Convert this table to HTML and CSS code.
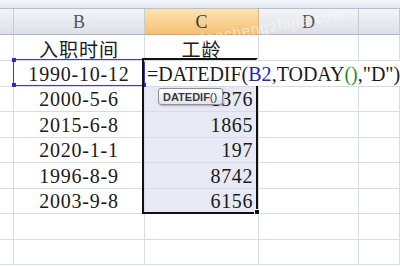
FILE: index.html
```html
<!DOCTYPE html>
<html>
<head>
<meta charset="utf-8">
<link rel="stylesheet" href="styles.css">
</head>
<body>
<div class="sheet">
  <div class="topbar"></div>
  <div class="grid">
    <div class="hd"></div>
    <div class="hd">B</div>
    <div class="hd hd-on">C</div>
    <div class="hd">D</div>
    <div class="hd"></div>

    <div class="c"></div>
    <div class="c cn">入职时间</div>
    <div class="c cn">工龄</div>
    <div class="c"></div>
    <div class="c"></div>

    <div class="c"></div>
    <div class="c dt">1990-10-12</div>
    <div class="c edit"><span>=DATEDIF(</span><span class="ref">B2</span><span>,TODAY</span><span class="par">()</span><span>,"D")</span></div>

    <div class="c"></div>
    <div class="c dt">2000-5-6</div>
    <div class="c num sel">1376</div>
    <div class="c"></div>
    <div class="c"></div>

    <div class="c"></div>
    <div class="c dt">2015-6-8</div>
    <div class="c num sel">1865</div>
    <div class="c"></div>
    <div class="c"></div>

    <div class="c"></div>
    <div class="c dt">2020-1-1</div>
    <div class="c num sel">197</div>
    <div class="c"></div>
    <div class="c"></div>

    <div class="c"></div>
    <div class="c dt">1996-8-9</div>
    <div class="c num sel">8742</div>
    <div class="c"></div>
    <div class="c"></div>

    <div class="c"></div>
    <div class="c dt">2003-9-8</div>
    <div class="c num sel">6156</div>
    <div class="c"></div>
    <div class="c"></div>

    <div class="c"></div>
    <div class="c"></div>
    <div class="c"></div>
    <div class="c"></div>
    <div class="c"></div>

    <div class="c"></div>
    <div class="c"></div>
    <div class="c"></div>
    <div class="c"></div>
    <div class="c"></div>
  </div>

  <div class="refbox">
    <i class="h tl"></i><i class="h tr"></i><i class="h bl"></i><i class="h br"></i>
  </div>
  <div class="selbox"></div>
  <div class="fill"></div>
  <div class="tip"><b>DATEDIF</b>()</div>
  <div class="wm">laochengzhijia.com</div>
</div>
</body>
</html>
```

FILE: styles.css
```css
* { box-sizing: border-box; }
html, body { margin: 0; padding: 0; background: #fff; }
body { width: 400px; height: 266px; overflow: hidden; }

.sheet { position: relative; width: 400px; height: 266px; overflow: hidden; }

.topbar {
  height: 9px;
  background: linear-gradient(#f4f7fb, #e3e9f2);
  border-bottom: 1px solid #b3c0d4;
}

.grid {
  display: grid;
  grid-template-columns: 14px 131px 114px 100px 41px;
  grid-template-rows: 26px 26px 26px 25px 26px 25px 26px 25px 26px 25px;
}

.hd {
  background: linear-gradient(#f3f4f7, #dde1e7);
  border-right: 1px solid #c6ccd6;
  border-bottom: 1px solid #a9b4c4;
  font-family: "Liberation Serif", serif;
  font-size: 18px;
  color: #555;
  display: flex;
  align-items: center;
  justify-content: center;
  padding-top: 1px;
}
.hd-on {
  background: linear-gradient(#fbe4b4, #f5c074);
  border-bottom-color: #e6a04a;
  border-right-color: #e8b878;
  color: #3a3a3a;
}

.c {
  border-right: 1px solid #d6dbe4;
  border-bottom: 1px solid #d6dbe4;
  font-family: "Liberation Serif", serif;
  font-size: 20px;
  color: #1a1a1a;
  display: flex;
  align-items: center;
  white-space: nowrap;
}
.cn {
  justify-content: center;
  font-family: "Noto Sans CJK SC", sans-serif;
  font-size: 19px;
  letter-spacing: 1px;
  padding-top: 1px;
}
.dt {
  justify-content: center;
  letter-spacing: 0.8px;
  padding-top: 1px;
}
.num {
  justify-content: flex-end;
  padding-right: 5px;
  letter-spacing: 0.6px;
  padding-top: 1px;
}
.sel { background: #e7e9f4; }

.edit {
  grid-column: 3 / 6;
  background: #fff;
  border-right: none;
  padding-left: 2px;
  padding-top: 1px;
  overflow: hidden;
}
.ref { color: #2323b4; }
.par { color: #2a8a2a; }

.refbox {
  position: absolute;
  left: 13px;
  top: 59px;
  width: 132px;
  height: 27px;
  border: 1px solid #3a3ad2;
}
.h {
  position: absolute;
  width: 4px;
  height: 4px;
  background: #2b2bd6;
}
.tl { left: -2px; top: -2px; }
.tr { right: -2px; top: -2px; background: #e8d44a; }
.bl { left: -2px; bottom: -2px; }
.br { right: -2px; bottom: -2px; }

.selbox {
  position: absolute;
  left: 142px;
  top: 58px;
  width: 116px;
  height: 156px;
  border: 2px solid #111;
  border-right-color: transparent;
}
.selbox::after {
  content: "";
  position: absolute;
  right: -2px;
  top: 26px;
  bottom: -2px;
  width: 2px;
  background: #111;
}

.fill {
  position: absolute;
  left: 254px;
  top: 209px;
  width: 6px;
  height: 6px;
  background: #111;
  border: 1px solid #fff;
}

.tip {
  position: absolute;
  left: 158px;
  top: 88px;
  width: 65px;
  height: 17px;
  border: 1px solid #8d9099;
  border-radius: 3px;
  background: linear-gradient(#ffffff, #e2e4ea);
  box-shadow: 1px 1px 2px rgba(0,0,0,0.25);
  font-family: "Liberation Sans", sans-serif;
  font-size: 11px;
  color: #333;
  display: flex;
  align-items: center;
  padding-left: 4px;
}
.tip b { font-weight: bold; color: #3a3a3a; }

.wm {
  position: absolute;
  left: 200px;
  top: 30px;
  font-family: "Liberation Sans", sans-serif;
  font-size: 15px;
  color: rgba(255,255,255,0.5);
  transform: rotate(-10deg);
  transform-origin: left top;
  letter-spacing: 1px;
}
```
